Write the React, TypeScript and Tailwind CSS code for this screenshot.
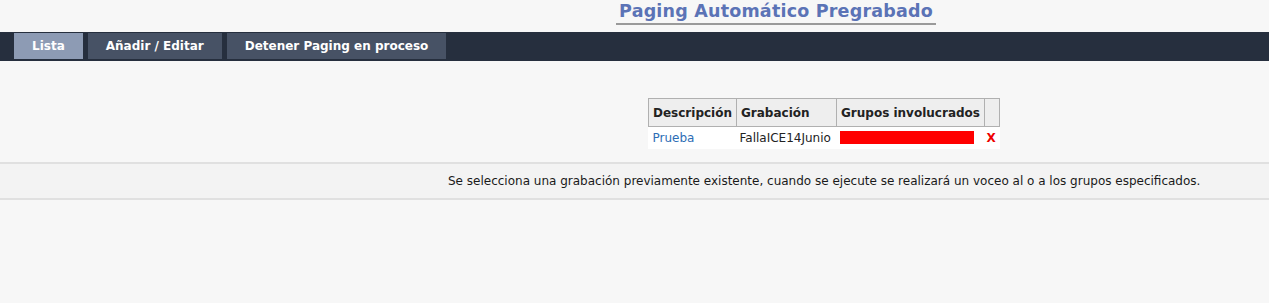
import React from "react";

export default function App() {
  const font = { fontFamily: '"DejaVu Sans", Verdana, sans-serif' };
  return (
    <div className="w-[1269px] h-[303px] bg-[#f7f7f7] text-[12px] text-[#1a1a1a]" style={font}>
      <div className="h-[32px] flex justify-center pl-[283px]">
        <div className="h-[25px] border-b-2 border-[#9a9a9a] px-[3px] flex items-end">
          <span className="text-[17.5px] font-bold text-[#5b73b6] leading-[24px] tracking-[0.2px]">
            Paging Automático Pregrabado
          </span>
        </div>
      </div>
      <div className="h-[29px] bg-[#262f3e] flex items-start gap-[5px] pl-[14px] pt-[1px]">
        <div className="h-[26px] px-[18px] bg-[#8d9bb4] text-white font-bold flex items-center">Lista</div>
        <div className="h-[26px] px-[18px] bg-[#475265] text-white font-bold flex items-center">Añadir / Editar</div>
        <div className="h-[26px] px-[18px] bg-[#475265] text-white font-bold flex items-center">Detener Paging en proceso</div>
      </div>
      <div className="h-[37px]" />
      <div className="flex pl-[648px]">
        <table className="border-collapse bg-white whitespace-nowrap">
          <thead>
            <tr className="bg-[#eeeeee]">
              <th className="border border-[#b0b0b0] h-[28px] px-[4px] text-left font-bold text-[#222] w-[88px]">Descripción</th>
              <th className="border border-[#b0b0b0] h-[28px] px-[4px] text-left font-bold text-[#222] w-[100px]">Grabación</th>
              <th className="border border-[#b0b0b0] h-[28px] px-[4px] text-left font-bold text-[#222] w-[148px]">Grupos involucrados</th>
              <th className="border border-[#b0b0b0] h-[28px] w-[15px]"></th>
            </tr>
          </thead>
          <tbody>
            <tr>
              <td className="h-[22px] px-[4px] text-[#2d6db5]">Prueba</td>
              <td className="h-[22px] px-[3px] text-[#222]">FallaICE14Junio</td>
              <td className="h-[22px] px-[3px]">
                <div className="w-[134px] h-[13px] bg-[#ff0000]" />
              </td>
              <td className="h-[22px] pl-[2px] pr-[1px] text-[#ee0000] font-bold">X</td>
            </tr>
          </tbody>
        </table>
      </div>
      <div className="h-[13px]" />
      <div className="h-[38px] bg-[#f3f3f3] border-t-2 border-b-2 border-[#e0e0e0] flex items-center pl-[448px]">
        <span>Se selecciona una grabación previamente existente, cuando se ejecute se realizará un voceo al o a los grupos especificados.</span>
      </div>
    </div>
  );
}
